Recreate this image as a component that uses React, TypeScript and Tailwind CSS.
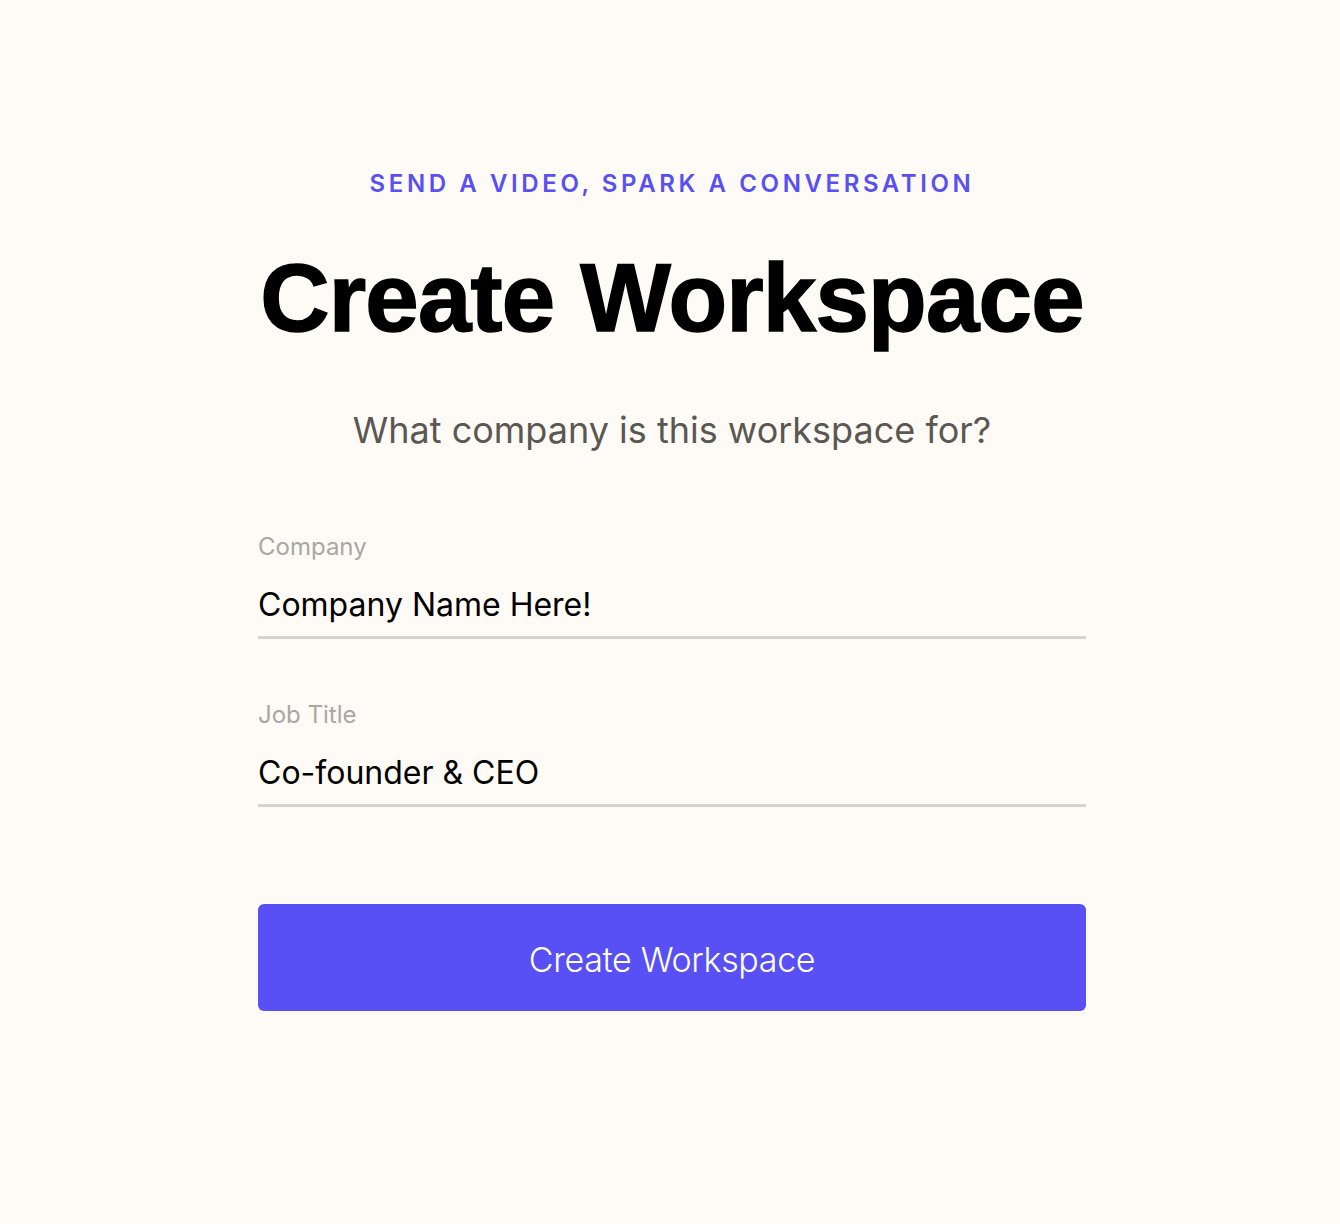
import { useState } from "react";

function Field({
  label,
  value,
  onChange,
}: {
  label: string;
  value: string;
  onChange: (v: string) => void;
}) {
  return (
    <label className="flex flex-col">
      <span className="text-[24px] leading-[28px] text-[#aaa7a3]">{label}</span>
      <input
        value={value}
        onChange={(e) => onChange(e.target.value)}
        className="mt-[24px] bg-transparent pb-[11px] text-[32px] leading-[40px] text-black outline-none border-b-[3px] border-[#d6d3cf]"
      />
    </label>
  );
}

export default function App() {
  const [company, setCompany] = useState("Company Name Here!");
  const [title, setTitle] = useState("Co-founder & CEO");

  return (
    <div
      className="min-h-[1224px] bg-[#fefbf6] flex justify-center"
      style={{ fontFamily: "Inter, 'Noto Sans', sans-serif" }}
    >
      <div className="w-[828px] ml-[4px] pt-[168px] flex flex-col">
        <p className="text-center text-[24px] leading-[32px] font-semibold tracking-[0.15em] text-[#5850f5]">
          SEND A VIDEO, SPARK A CONVERSATION
        </p>

        <h1
          className="mt-[46px] text-center text-[96px] leading-[104px] font-bold tracking-[-0.008em] text-black [-webkit-text-stroke:1.5px_black]"
          style={{ fontFamily: "'Liberation Sans', Arial, sans-serif" }}
        >
          Create Workspace
        </h1>

        <p className="mt-[58px] text-center text-[36px] leading-[44px] text-[#5b5752]">
          What company is this workspace for?
        </p>

        <div className="mt-[81px] flex flex-col gap-[62px]">
          <Field label="Company" value={company} onChange={setCompany} />
          <Field label="Job Title" value={title} onChange={setTitle} />
        </div>

        <button className="mt-[97px] h-[107px] rounded-[6px] bg-[#5850f5] pt-[3px] text-white text-[34px] font-light tracking-[-0.01em]">
          Create Workspace
        </button>
      </div>
    </div>
  );
}
